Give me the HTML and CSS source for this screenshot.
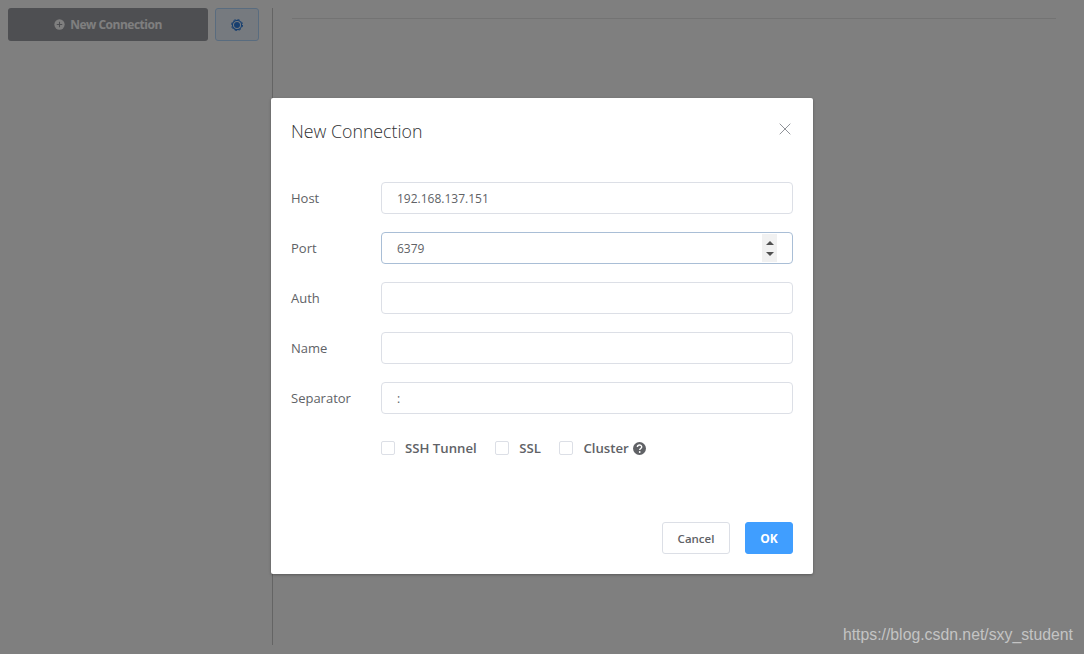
FILE: index.html
```html
<!DOCTYPE html>
<html lang="en">
<head>
<meta charset="utf-8">
<title>New Connection</title>
<link rel="stylesheet" href="styles.css">
</head>
<body>
<div class="app">
  <aside class="sidebar">
    <div class="side-actions">
      <button class="new-btn"><svg class="plus" viewBox="0 0 12 12"><circle cx="6" cy="6" r="5.6" fill="currentColor"/><path d="M3 6h6M6 3v6" stroke="#9c9ea4" stroke-width="1.2"/></svg>New Connection</button>
      <button class="gear-btn"><svg viewBox="0 0 14 14" width="14" height="14"><circle cx="7" cy="7" r="3" fill="#2f7fe0"/><circle cx="7" cy="7" r="4.6" fill="none" stroke="#2f7fe0" stroke-width="1.1"/><circle cx="7" cy="7" r="5.5" fill="none" stroke="#2f7fe0" stroke-width="1" stroke-dasharray="2.2 2.12"/></svg></button>
    </div>
  </aside>
  <main class="content"><div class="rule"></div></main>
</div>
<div class="overlay">
  <section class="dialog">
    <header class="dialog-head">
      <h2 class="dialog-title">New Connection</h2>
      <svg class="close" viewBox="0 0 12 12" width="12" height="12"><path d="M.7.7l10.6 10.6M11.3.7L.7 11.3" stroke="#909399" stroke-width="1" fill="none"/></svg>
    </header>
    <div class="form">
      <div class="row"><span class="label">Host</span><div class="input">192.168.137.151</div></div>
      <div class="row"><span class="label">Port</span><div class="input focused">6379<div class="spin"><i class="up"></i><i class="down"></i></div></div></div>
      <div class="row"><span class="label">Auth</span><div class="input"></div></div>
      <div class="row"><span class="label">Name</span><div class="input"></div></div>
      <div class="row"><span class="label">Separator</span><div class="input">:</div></div>
      <div class="checks">
        <span class="check"><i class="box"></i>SSH Tunnel</span>
        <span class="check"><i class="box"></i>SSL</span>
        <span class="check"><i class="box"></i>Cluster<svg class="help" viewBox="0 0 13 13" width="13" height="13"><circle cx="6.5" cy="6.5" r="6.5" fill="#606266"/><path d="M4.4 5.1c0-2.7 4.3-2.7 4.3-.1 0 1.5-2 1.5-2 3" fill="none" stroke="#fff" stroke-width="1.4"/><circle cx="6.7" cy="10" r=".9" fill="#fff"/></svg></span>
      </div>
    </div>
    <footer class="dialog-foot">
      <button class="btn">Cancel</button>
      <button class="btn primary">OK</button>
    </footer>
  </section>
</div>
<div class="watermark">https://blog.csdn.net/sxy_student</div>
</body>
</html>
```
FILE: styles.css
```css
* { box-sizing: border-box; }
html, body { height: 100%; }
body {
  margin: 0;
  background: #fff;
  font-family: "Open Sans", "Noto Sans", sans-serif;
  overflow: hidden;
}
.app {
  display: flex;
  height: 654px;
  padding: 8px 28px 9px 8px;
}
.sidebar {
  width: 265px;
  border-right: 1px solid #c8c8c8;
  flex: none;
}
.side-actions { display: flex; gap: 7px; }
.new-btn {
  width: 200px;
  height: 33px;
  border: 0;
  border-radius: 3px;
  background: #9c9ea4;
  color: #fff;
  font: 700 12px "Open Sans", sans-serif;
  letter-spacing: -.5px;
  display: flex;
  align-items: center;
  justify-content: center;
  gap: 5px;
  padding: 0;
}
.plus { width: 11px; height: 11px; }
.gear-btn {
  width: 44px;
  height: 33px;
  border: 1px solid #b3d8ff;
  border-radius: 3px;
  background: #ecf5ff;
  display: flex;
  align-items: center;
  justify-content: center;
  padding: 0;
}
.content { flex: 1; padding: 10px 0 0 19px; }
.rule { border-top: 1px solid #e6e6e6; }
.overlay {
  position: absolute;
  inset: 0;
  background: rgba(0, 0, 0, .5);
  display: flex;
  justify-content: center;
  padding-top: 98px;
}
.dialog {
  width: 542px;
  height: 476px;
  background: #fff;
  border-radius: 2px;
  box-shadow: 0 1px 3px rgba(0, 0, 0, .3);
  padding: 0 20px;
  display: flex;
  flex-direction: column;
}
.dialog-head {
  display: flex;
  justify-content: space-between;
  align-items: flex-start;
  padding-top: 20px;
  height: 84px;
}
.dialog-title {
  margin: 0;
  font-size: 17.75px;
  line-height: 26px;
  font-weight: 300;
  color: #303133;
}
.close { margin: 5px 2px 0 0; }
.form { display: flex; flex-direction: column; gap: 18px; }
.row { display: flex; align-items: center; height: 32px; }
.label { width: 90px; font-size: 13px; color: #606266; }
.input {
  position: relative;
  width: 412px;
  height: 32px;
  border: 1px solid #dcdfe6;
  border-radius: 4px;
  padding: 0 15px;
  line-height: 31px;
  font-size: 12px;
  color: #606266;
}
.focused { border-color: #a9bed6; }
.spin {
  position: absolute;
  top: 1px;
  right: 15px;
  width: 15px;
  height: 28px;
  background: #f1f1f1;
  display: flex;
  flex-direction: column;
  align-items: center;
  justify-content: space-between;
  padding: 7px 0 6px;
}
.spin i { width: 0; height: 0; border: 4px solid transparent; }
.spin .up { border-top: 0; border-bottom: 4px solid #505050; }
.spin .down { border-bottom: 0; border-top: 4px solid #505050; }
.checks {
  display: flex;
  align-items: center;
  height: 32px;
  padding-left: 90px;
  gap: 18.5px;
}
.check {
  display: flex;
  align-items: center;
  font-size: 13.2px;
  font-weight: 600;
  color: #606266;
}
.box {
  width: 14px;
  height: 14px;
  border: 1px solid #dcdfe6;
  border-radius: 2px;
  margin-right: 10px;
}
.help { margin-left: 4px; }
.dialog-foot {
  display: flex;
  justify-content: flex-end;
  gap: 15px;
  margin-top: 58px;
}
.btn {
  height: 32px;
  border: 1px solid #dcdfe6;
  border-radius: 3px;
  background: #fff;
  color: #606266;
  font: 600 11.5px "Open Sans", sans-serif;
  width: 68px;
  padding: 0;
}
.primary { width: 48px; background: #409eff; border-color: #409eff; color: #fff; font-weight: 700; font-size: 12px; }
.watermark {
  position: absolute;
  right: 11px;
  bottom: 9px;
  font: 15.8px/20px "Liberation Sans", sans-serif;
  color: #c4c4c4;
}
```
